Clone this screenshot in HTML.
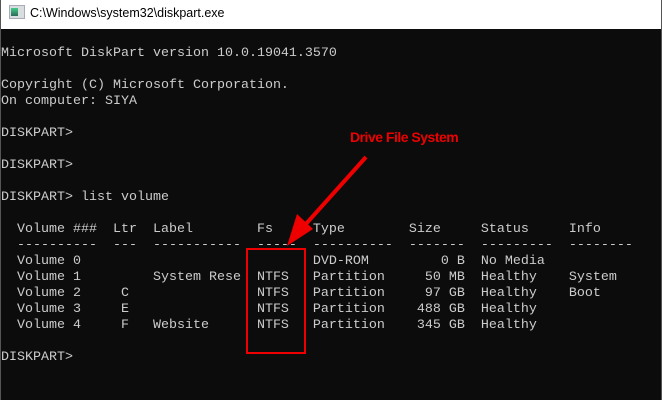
<!DOCTYPE html>
<html><head><style>
body{margin:0;width:662px;height:400px;overflow:hidden;background:#0c0c0c;position:relative;font-family:"Liberation Sans",sans-serif}
#tb{position:absolute;left:0;top:0;width:662px;height:29px;background:#fff}
#tt{position:absolute;left:30px;top:6px;font-size:12.5px;color:#000}
#ic{position:absolute;left:9px;top:5px;width:14px;height:12px;background:#d8dedd;border:1px solid #aab}
#ic div{position:absolute;left:1px;top:2px;width:7px;height:8px;background:linear-gradient(#4c8,#2a6a5a)}
#con{position:absolute;left:1px;top:30px;margin:0;font-family:"Liberation Mono",monospace;font-size:13.33px;line-height:16px;color:#cccccc;white-space:pre}
#bl{position:absolute;left:0;top:0;width:1px;height:400px;background:#555}
#br{position:absolute;right:0;top:0;width:1px;height:400px;background:#555}
#box{position:absolute;left:246px;top:248px;width:56px;height:102px;border:2px solid #e00}
#lab{position:absolute;left:350px;top:129px;font-size:14px;font-weight:bold;color:#e00;letter-spacing:-0.5px}
</style></head><body>
<div id="tb"><div id="ic"><div></div></div><div id="tt">C:\Windows\system32\diskpart.exe</div></div>
<pre id="con">

Microsoft DiskPart version 10.0.19041.3570

Copyright (C) Microsoft Corporation.
On computer: SIYA

DISKPART&gt;

DISKPART&gt;

DISKPART&gt; list volume

  Volume ###  Ltr  Label        Fs     Type        Size     Status     Info
  ----------  ---  -----------  -----  ----------  -------  ---------  --------
  Volume 0                             DVD-ROM         0 B  No Media
  Volume 1         System Rese  NTFS   Partition     50 MB  Healthy    System
  Volume 2     C                NTFS   Partition     97 GB  Healthy    Boot
  Volume 3     E                NTFS   Partition    488 GB  Healthy
  Volume 4     F   Website      NTFS   Partition    345 GB  Healthy

DISKPART&gt;
</pre>
<div id="box"></div>
<div id="lab">Drive File System</div>
<svg style="position:absolute;left:0;top:0" width="662" height="400">
<line x1="366" y1="157" x2="305" y2="225" stroke="#e00" stroke-width="4"/>
<polygon points="287,246 297,214 313,229" fill="#e00"/>
</svg>
<div id="bl"></div><div id="br"></div>
</body></html>
